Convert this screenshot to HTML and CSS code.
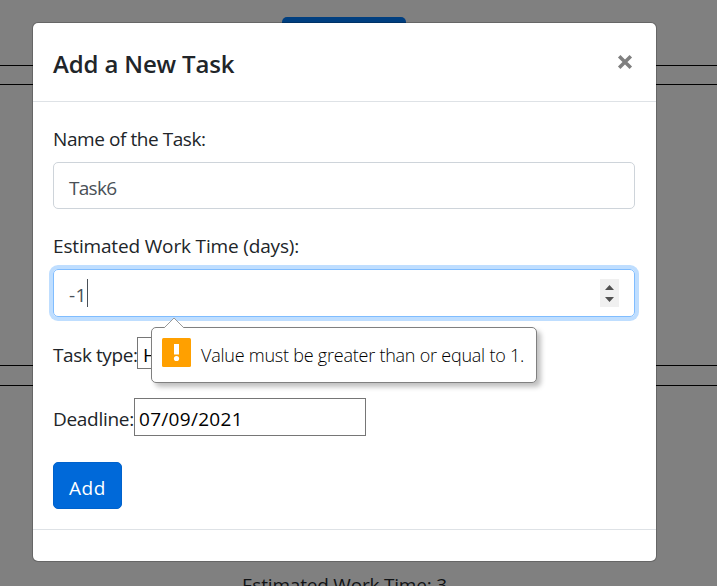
FILE: index.html
```html
<!DOCTYPE html>
<html lang="en">
<head>
<meta charset="utf-8">
<title>Tasks</title>
<link rel="stylesheet" href="styles.css">
</head>
<body>
<main class="board">
  <div class="toolbar"><span class="new-task"></span></div>
  <section class="task task-middle"></section>
  <section class="task task-last"><p class="estimate"><span>Estimated Work Time: 3</span></p></section>
</main>
<div class="overlay">
  <div class="modal">
    <header class="modal-header">
      <h5 class="title"><span>Add a New Task</span></h5>
      <svg class="close" viewBox="0 0 16 16" width="16" height="16"><path d="M2.200 2.200 13.800 13.800M13.800 2.200 2.200 13.800" stroke="#7f7f7f" stroke-width="3.500"/></svg>
    </header>
    <form class="modal-body">
      <label class="label name-label">Name of the Task:</label>
      <div class="control"><span class="name-value">Task6</span></div>
      <label class="label time-label">Estimated Work Time (days):</label>
      <div class="control focused">
        <span class="time-value">-1</span><i class="caret"></i>
        <svg class="spinner" viewBox="0 0 19 28" width="19" height="28"><path d="M0 0h19v28H0z" fill="#f0f0f0"/><path d="M5 11h9L9.500 6zM5 18h9l-4.500 5z" fill="#505050"/></svg>
      </div>
      <div class="row type-row"><label class="type-label">Task type:</label><div class="select">High</div></div>
      <div class="row date-row"><label class="date-label">Deadline:</label><div class="date"><span>07/09/2021</span></div></div>
      <button class="add" type="button">Add</button>
    </form>
    <footer class="modal-footer"></footer>
  </div>
</div>
<div class="tooltip">
  <svg class="pointer" viewBox="0 0 22 11" width="22" height="11"><path d="M1 11 11 1l10 10" fill="#fff" stroke="#999"/></svg>
  <svg class="warning" viewBox="0 0 29 29" width="29" height="29"><rect width="29" height="29" rx="1.500" fill="#ffa000"/><path d="M12 6h5v10.500h-5z" fill="#fff"/><circle cx="14.500" cy="20.500" r="2.600" fill="#fff"/></svg>
  <span class="message">Value must be greater than or equal to 1.</span>
</div>
</body>
</html>
```
FILE: styles.css
```css
* { box-sizing: border-box; }
body {
  margin: 0;
  height: 586px;
  overflow: hidden;
  background: #808080;
  color: #212529;
  font: 19px/30px "Open Sans", "Noto Sans", sans-serif;
  white-space: nowrap;
}
.toolbar { height: 66px; padding: 17px 0 0 282px; border-bottom: 1px solid #000; }
.new-task { display: block; width: 124px; height: 40px; border-radius: 5px; background: #003f80; }
.task { border-top: 1px solid #000; }
.task-middle { height: 282px; margin: 18px 0 19px; border-bottom: 1px solid #000; }
.task-last { height: 201px; padding: 184px 0 0 242px; overflow: hidden; }
.estimate { margin: 0; color: #111315; letter-spacing: -0.2px; }
.overlay { position: absolute; inset: 0; padding: 22px 0 0 32px; }
.modal {
  width: 625px;
  height: 540px;
  display: flex;
  flex-direction: column;
  background: #fff;
  background-clip: padding-box;
  border: 1px solid rgba(0, 0, 0, 0.2);
  border-radius: 6px;
}
.modal-header {
  height: 79px;
  flex: none;
  display: flex;
  justify-content: space-between;
  padding: 26px 23px 0 20px;
  border-bottom: 1px solid #dee2e6;
}
.title { margin: 0; font-size: 24px; font-weight: 600; letter-spacing: -0.15px; }
.close { margin-top: 5px; }
.modal-body { height: 427px; flex: none; padding: 22px 20px 0; }
.label { display: block; height: 30px; }
.name-label { letter-spacing: -0.43px; }
.time-label { letter-spacing: -0.16px; }
.name-value { padding-top: 1px; letter-spacing: -0.7px; }
.time-value { letter-spacing: 0.5px; }
.control {
  width: 582px;
  height: 47px;
  margin: 8px 0 22px;
  padding: 3px 15px 0;
  display: flex;
  align-items: center;
  border: 1px solid #ced4da;
  border-radius: 5px;
  color: #495057;
}
.focused {
  height: 48px;
  margin-bottom: 20px;
  border-color: #80bdff;
  box-shadow: 0 0 0 4px #bfdeff;
}
.caret { width: 1px; height: 28px; margin-top: -3px; background: #495057; }
.spinner { margin: -4px 0 0 auto; }
.row { display: flex; }
.type-row { height: 32px; }
.type-row label { padding-top: 3px; width: 84px; letter-spacing: -0.4px; }
.select { width: 160px; height: 32px; padding: 2px 5px; border: 1px solid #767676; color: #000; }
.date-row { height: 38px; margin-top: 29px; }
.date-row label { padding-top: 6px; width: 81px; letter-spacing: -0.3px; }
.date { width: 232px; height: 38px; padding: 5px 4px; border: 1px solid #767676; color: #000; letter-spacing: 0.3px; }
.add {
  display: block;
  width: 69px;
  height: 47px;
  margin-top: 26px;
  padding: 4px 0 0;
  border: 1px solid #0062cc;
  border-radius: 5px;
  background: #0069d9;
  color: #fff;
  font: inherit;
  letter-spacing: 0.5px;
}
.modal-footer { flex: 1; border-top: 1px solid #dee2e6; }
.tooltip {
  position: absolute;
  left: 151px;
  top: 327px;
  width: 386px;
  height: 56px;
  display: flex;
  padding: 10px;
  gap: 10px;
  border: 1px solid #808080;
  border-radius: 5px;
  background: #fff;
  box-shadow: 4px 4px 5px rgba(0, 0, 0, 0.25);
  color: #000;
  font-size: 18px;
  font-weight: 300;
}
.pointer { position: absolute; left: 11px; top: -11px; }
.warning { flex: none; }
.message { padding-top: 2px; letter-spacing: -0.23px; }
```
